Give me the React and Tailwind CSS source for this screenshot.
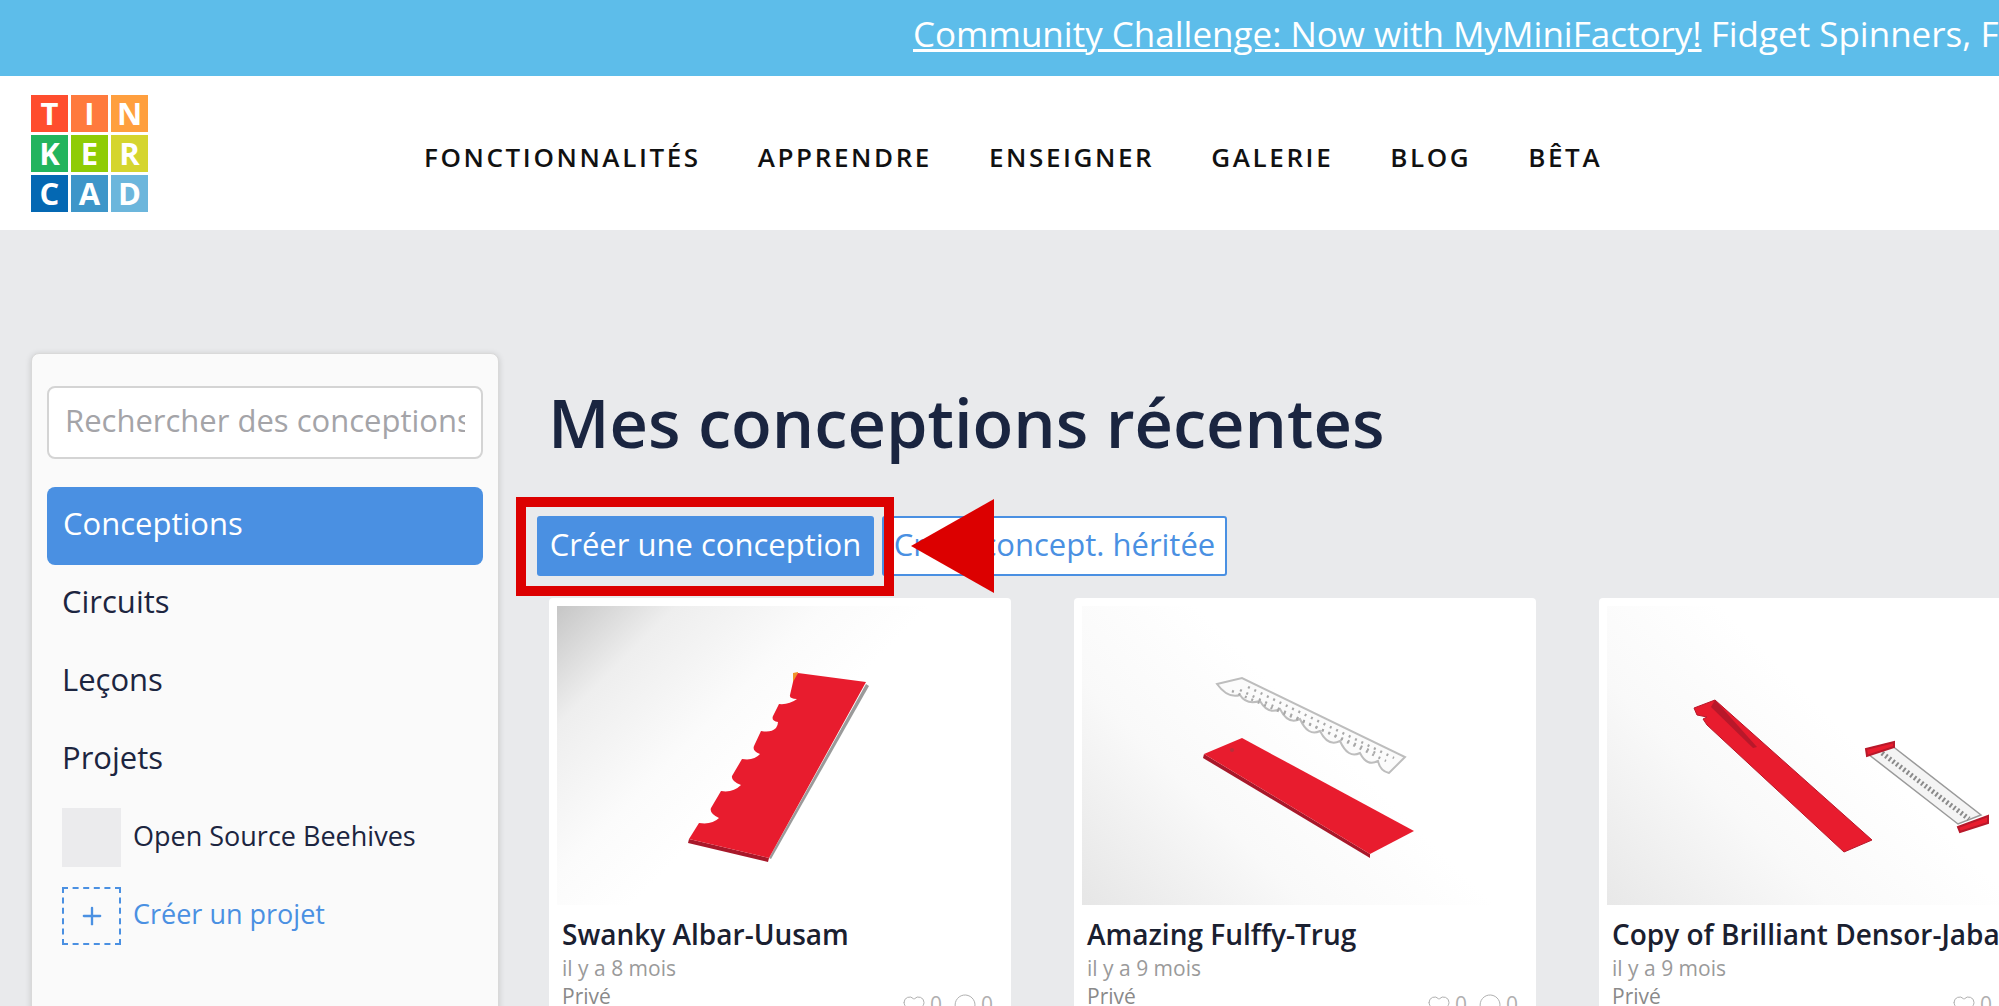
import React from 'react';
import { Heart, MessageCircle, Plus } from 'lucide-react';

const logoCells = [
  ['T', 'bg-[#ff4d2e]'], ['I', 'bg-[#ff7a3d]'], ['N', 'bg-[#ff9f3e]'],
  ['K', 'bg-[#22b45e]'], ['E', 'bg-[#8fcc05]'], ['R', 'bg-[#d5d52e]'],
  ['C', 'bg-[#0468b3]'], ['A', 'bg-[#3e96c9]'], ['D', 'bg-[#6cb6dc]'],
];

const navLinks = ['FONCTIONNALITÉS', 'APPRENDRE', 'ENSEIGNER', 'GALERIE', 'BLOG', 'BÊTA'];

const ThumbOne = () => (
  <svg viewBox="0 0 450 297" className="w-full h-full">
    <path d="M309 77 L312 79 L214 252 L212 251 Z" fill="#9a9a9a" />
    <path d="M132 232 L212 251 L211 255 L131 236 Z" fill="#a8182a" />
    <path d="M236 66 L241 65 L240 76 L236 75 Z" fill="#f0932b" />
    <path d="M241 66 L309 75 L212 251 L132 232 L142 216 Q155 218 162 211 Q152 206 154 201 L164 184 Q176 186 184 178 Q174 174 175 169 L185 152 Q197 154 203 147 Q195 144 197 139 L204 124 Q214 126 219 121 Q221 118 221 115 Q214 114 216 109 L222 97 Q232 98 240 92 Q232 92 233 88 L236 75 Z" fill="#e81c2e" />
  </svg>
);

const ThumbTwo = () => (
  <svg viewBox="0 0 450 297" className="w-full h-full">
    <path d="M135 77 L160 71 L323 150 L307 166 Q298 164 296 154 Q285 160 278 146 Q266 152 258 134 Q246 140 238 124 Q226 130 218 112 Q206 118 198 102 Q186 108 178 94 Q164 98 158 88 Q146 92 135 77 Z" fill="#fbfbfb" stroke="#bdbdbd" strokeWidth="2" />
    <path d="M166 80 L312 151" stroke="#a8a8a8" strokeWidth="2.5" strokeDasharray="2 5" />
    <path d="M158 83 L304 154" stroke="#a8a8a8" strokeWidth="2.5" strokeDasharray="2 5" />
    <path d="M150 84 L296 147" stroke="#a8a8a8" strokeWidth="2.5" strokeDasharray="2 5" />
    <path d="M122 147 L288 247 L288 251 L121 151 Z" fill="#a8182a" />
    <path d="M122 147 L160 131 L332 224 L288 247 Z" fill="#e81c2e" />
    <circle cx="150" cy="143" r="2" fill="#b5303a" />
  </svg>
);

const ThumbThree = () => (
  <svg viewBox="0 0 450 297" className="w-full h-full">
    <path d="M87 101 L108 93 L265 233 L237 245 L100 118 L96 112 L100 110 L90 108 Z" fill="#e81c2e" stroke="#b8182a" strokeWidth="1" />
    <path d="M108 93 L150 140 L146 141 L104 100 Z" fill="#b8182a" />
    <path d="M261 147 L284 138 L374 208 L351 217 Z" fill="#f4f4f4" stroke="#9a9a9a" strokeWidth="1.5" />
    <path d="M275 146 L362 212" stroke="#8a8a8a" strokeWidth="5" strokeDasharray="2 2.5" />
    <path d="M259 142 L287 135 L287 140 L260 149 Z" fill="#e81c2e" stroke="#b8182a" strokeWidth="2" />
    <path d="M351 220 L381 209 L381 216 L353 225 Z" fill="#e81c2e" stroke="#b8182a" strokeWidth="2" />
  </svg>
);

const designs = [
  { name: 'Swanky Albar-Uusam', age: 'il y a 8 mois', Thumb: ThumbOne, bg: 'bg-[linear-gradient(135deg,#c6c6c6_0%,#eeeeee_16%,#fbfbfb_36%,#ffffff_50%)]' },
  { name: 'Amazing Fulffy-Trug', age: 'il y a 9 mois', Thumb: ThumbTwo, bg: 'bg-[linear-gradient(45deg,#e6e6e6_0%,#f9f9f9_30%,#ffffff_55%)]' },
  { name: 'Copy of Brilliant Densor-Jabar', age: 'il y a 9 mois', Thumb: ThumbThree, bg: 'bg-[linear-gradient(45deg,#e8e8e8_0%,#f9f9f9_30%,#ffffff_55%)]' },
];

const DesignCard = ({ name, age, Thumb, bg }) => (
  <div className="w-[462px] shrink-0 bg-white rounded-[4px] px-[8px] pt-[8px] h-[440px]">
    <div className={`w-[450px] h-[299px] ${bg}`}>
      <Thumb />
    </div>
    <div className="px-[5px] pt-[11px]">
      <div className="text-[28px] leading-[36px] font-semibold text-[#1a2030] whitespace-nowrap">{name}</div>
      <div className="text-[21px] leading-[29px] text-[#9a9a9a] mt-[2px]">{age}</div>
      <div className="flex justify-between items-start text-[21px] leading-[27px] text-[#8a8a8a]">
        <span>Privé</span>
        <span className="flex items-center gap-[4px] text-[#b0b0b0] pt-[8px] pr-[5px]">
          <Heart size={24} strokeWidth={1} />
          <span className="mr-[7px]">0</span>
          <MessageCircle size={24} strokeWidth={1} />
          <span>0</span>
        </span>
      </div>
    </div>
  </div>
);

export default function App() {
  return (
    <div className="relative w-[1999px] h-[1006px] overflow-hidden bg-[#e9eaec] font-['Open_Sans',sans-serif]">
      {/* Banner */}
      <div className="h-[76px] bg-[#5dbdea] text-white text-[35px] leading-[68px] pl-[913px] whitespace-nowrap overflow-hidden">
        <a className="underline">Community Challenge: Now with MyMiniFactory!</a> Fidget Spinners, F
      </div>

      {/* Header */}
      <div className="h-[154px] bg-white flex pl-[31px] pt-[19px]">
        <div className="grid grid-cols-3 gap-[3px] w-[117px] h-[117px] shrink-0">
          {logoCells.map(([letter, color]) => (
            <div key={letter} className={`${color} flex items-center justify-center text-white text-[31px] leading-none font-bold`}>{letter}</div>
          ))}
        </div>
        <nav className="flex gap-[57px] ml-[276px] mt-[44px] h-[36px] items-center">
          {navLinks.map((link) => (
            <a key={link} className="text-[26px] font-semibold tracking-[0.1em] text-[#111] whitespace-nowrap">{link}</a>
          ))}
        </nav>
      </div>

      {/* Main */}
      <div className="flex pl-[31px] pt-[123px]">
        <aside className="w-[468px] h-[700px] shrink-0 bg-[#fafafa] border border-[#d9d9d9] rounded-[8px] shadow-[0_1px_6px_rgba(0,0,0,0.15)] px-[15px] pt-[32px]">
          <input
            readOnly
            placeholder="Rechercher des conceptions"
            className="w-[436px] h-[73px] bg-white border-2 border-[#d4d4d4] rounded-[8px] pl-[16px] pr-[16px] pb-[5px] text-[31px] placeholder:text-[#a4a4a8] outline-none"
          />
          <div className="mt-[28px] h-[78px] bg-[#4a90e2] rounded-[8px] text-white text-[31px] flex items-center pl-[16px] pb-[6px]">Conceptions</div>
          {['Circuits', 'Leçons', 'Projets'].map((item) => (
            <div key={item} className="h-[78px] text-[#1c2540] text-[31px] flex items-center pl-[15px] pb-[6px]">{item}</div>
          ))}
          <div className="flex items-center gap-[12px] pl-[15px] mt-[9px]">
            <div className="w-[59px] h-[59px] bg-[#ebebed]" />
            <span className="text-[27px] text-[#1c2540] pb-[2px]">Open Source Beehives</span>
          </div>
          <div className="flex items-center gap-[12px] pl-[15px] mt-[20px]">
            <div className="w-[59px] h-[58px] border-2 border-dashed border-[#4a90e2] flex items-center justify-center text-[#4a90e2]">
              <Plus size={28} strokeWidth={2} />
            </div>
            <span className="text-[27px] text-[#4a90e2] pb-[4px]">Créer un projet</span>
          </div>
        </aside>

        <main className="pl-[50px] flex-1 min-w-0">
          <h1 className="text-[66.8px] leading-[88px] font-semibold text-[#1a2540] mt-[26px] -ml-[1px] whitespace-nowrap">Mes conceptions récentes</h1>
          <div className="flex gap-[8px] -ml-[12px] mt-[49px]">
            <button className="w-[337px] h-[60px] bg-[#4a90e2] rounded-[3px] text-white text-[31px] leading-none pb-[4px]">Créer une conception</button>
            <button className="w-[345px] h-[60px] bg-white border-2 border-[#4a90e2] rounded-[3px] text-[#4a90e2] text-[31px] leading-none pb-[4px] whitespace-nowrap">Créer concept. héritée</button>
          </div>
          <div className="flex gap-[63px] mt-[22px]">
            {designs.map((d) => (
              <DesignCard key={d.name} {...d} />
            ))}
          </div>
        </main>
      </div>

      {/* Tutorial annotation over the buttons */}
      <div className="absolute left-[516px] top-[497px] w-[378px] h-[99px] border-[10px] border-[#dc0000]" />
      <svg className="absolute left-[911px] top-[499px] w-[83px] h-[94px]" viewBox="0 0 83 94">
        <path d="M0 47 L83 0 L83 94 Z" fill="#dc0000" />
      </svg>
    </div>
  );
}
